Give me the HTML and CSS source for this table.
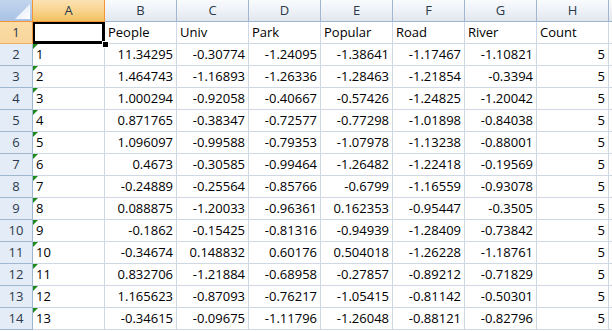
FILE: index.html
```html
<!DOCTYPE html>
<html lang="en">
<head>
    <meta charset="UTF-8">
    <title>Sheet1</title>
    <link rel="stylesheet" href="styles.css">
</head>
<body>
    <div class="sheet" id="sheet"></div>

    <script>
        const cols = ['A', 'B', 'C', 'D', 'E', 'F', 'G', 'H'];
        const rows = [
            ['', 'People', 'Univ', 'Park', 'Popular', 'Road', 'River', 'Count'],
            ['1', '11.34295', '-0.30774', '-1.24095', '-1.38641', '-1.17467', '-1.10821', '5'],
            ['2', '1.464743', '-1.16893', '-1.26336', '-1.28463', '-1.21854', '-0.3394', '5'],
            ['3', '1.000294', '-0.92058', '-0.40667', '-0.57426', '-1.24825', '-1.20042', '5'],
            ['4', '0.871765', '-0.38347', '-0.72577', '-0.77298', '-1.01898', '-0.84038', '5'],
            ['5', '1.096097', '-0.99588', '-0.79353', '-1.07978', '-1.13238', '-0.88001', '5'],
            ['6', '0.4673', '-0.30585', '-0.99464', '-1.26482', '-1.22418', '-0.19569', '5'],
            ['7', '-0.24889', '-0.25564', '-0.85766', '-0.6799', '-1.16559', '-0.93078', '5'],
            ['8', '0.088875', '-1.20033', '-0.96361', '0.162353', '-0.95447', '-0.3505', '5'],
            ['9', '-0.1862', '-0.15425', '-0.81316', '-0.94939', '-1.28409', '-0.73842', '5'],
            ['10', '-0.34674', '0.148832', '0.60176', '0.504018', '-1.26228', '-1.18761', '5'],
            ['11', '0.832706', '-1.21884', '-0.68958', '-0.27857', '-0.89212', '-0.71829', '5'],
            ['12', '1.165623', '-0.87093', '-0.76217', '-1.05415', '-0.81142', '-0.50301', '5'],
            ['13', '-0.34615', '-0.09675', '-1.11796', '-1.26048', '-0.88121', '-0.82796', '5']
        ];

        function cell(cls, text) {
            return `<div class="${cls}">${text}</div>`;
        }

        let html = cell('corner', '');
        cols.forEach((c, i) => {
            html += cell(i === 0 ? 'col-head selected' : 'col-head', c);
        });
        html += cell('col-head filler', '');

        rows.forEach((row, r) => {
            html += cell(r === 0 ? 'row-head selected' : 'row-head', r + 1);
            row.forEach((val, c) => {
                let cls = 'cell';
                if (r === 0 && c === 0) cls += ' active';
                else if (c === 0) cls += ' text-num';
                else if (r > 0) cls += ' num';
                html += cell(cls, val);
            });
            html += cell('cell filler', '');
        });

        document.getElementById('sheet').innerHTML = html;
    </script>
</body>
</html>
```

FILE: styles.css
```css
body {
    margin: 0;
    background: white;
    font-family: "Open Sans", "Liberation Sans", sans-serif;
    font-size: 13px;
    color: #000;
    overflow: hidden;
}

.sheet {
    display: grid;
    grid-template-columns: 33px repeat(8, 72px) 1fr;
    grid-auto-rows: 22px;
}

.sheet > div {
    box-sizing: border-box;
    display: flex;
    align-items: center;
    line-height: 21px;
    white-space: nowrap;
    overflow: hidden;
}

.corner {
    position: relative;
    background: linear-gradient(#c2d5ee, #a9c2e4);
    border-right: 1px solid #f29536;
    border-bottom: 1px solid #f29536;
}

.corner::after {
    content: "";
    position: absolute;
    right: 2px;
    bottom: 2px;
    width: 15px;
    height: 15px;
    background: linear-gradient(135deg, #d9e4f3, #ffffff);
    clip-path: polygon(100% 0, 100% 100%, 0 100%);
}

.col-head {
    justify-content: center;
    background: linear-gradient(#f9fbfd 0%, #eef2f7 50%, #e2e7ef 100%);
    border-right: 1px solid #9eb6ce;
    border-bottom: 1px solid #9eb6ce;
    color: #2b3a4a;
}

.col-head.selected {
    background: linear-gradient(#fbe2b3 0%, #f8d48f 50%, #f2c15f 100%);
    border-right-color: #f29536;
    border-bottom-color: #f29536;
}

.col-head.filler {
    border-right: none;
}

.row-head {
    justify-content: center;
    background: #e4ecf7;
    border-right: 1px solid #9eb6ce;
    border-bottom: 1px solid #9eb6ce;
    color: #2b3a4a;
}

.row-head.selected {
    background: linear-gradient(#fbdda6, #f8d59b);
    border-right-color: #f29536;
    border-bottom-color: #f2b15f;
}

.cell {
    padding: 0 3px;
    border-right: 1px solid #d0d7e5;
    border-bottom: 1px solid #d0d7e5;
}

.cell.num {
    justify-content: flex-end;
}

.cell.filler {
    border-right: none;
}

.text-num {
    position: relative;
}

.text-num::before {
    content: "";
    position: absolute;
    left: 0;
    top: 0;
    border-top: 5px solid #1c8a1c;
    border-right: 5px solid transparent;
}

.active {
    position: relative;
    overflow: visible !important;
}

.active::after {
    content: "";
    position: absolute;
    left: 0;
    top: 0;
    right: -1px;
    bottom: -1px;
    border: 2px solid #000;
    border-right-width: 3px;
    border-bottom-width: 3px;
}

.active::before {
    content: "";
    position: absolute;
    right: -5px;
    bottom: -5px;
    width: 5px;
    height: 5px;
    background: #000;
    border: 1px solid #fff;
    z-index: 2;
}
```
